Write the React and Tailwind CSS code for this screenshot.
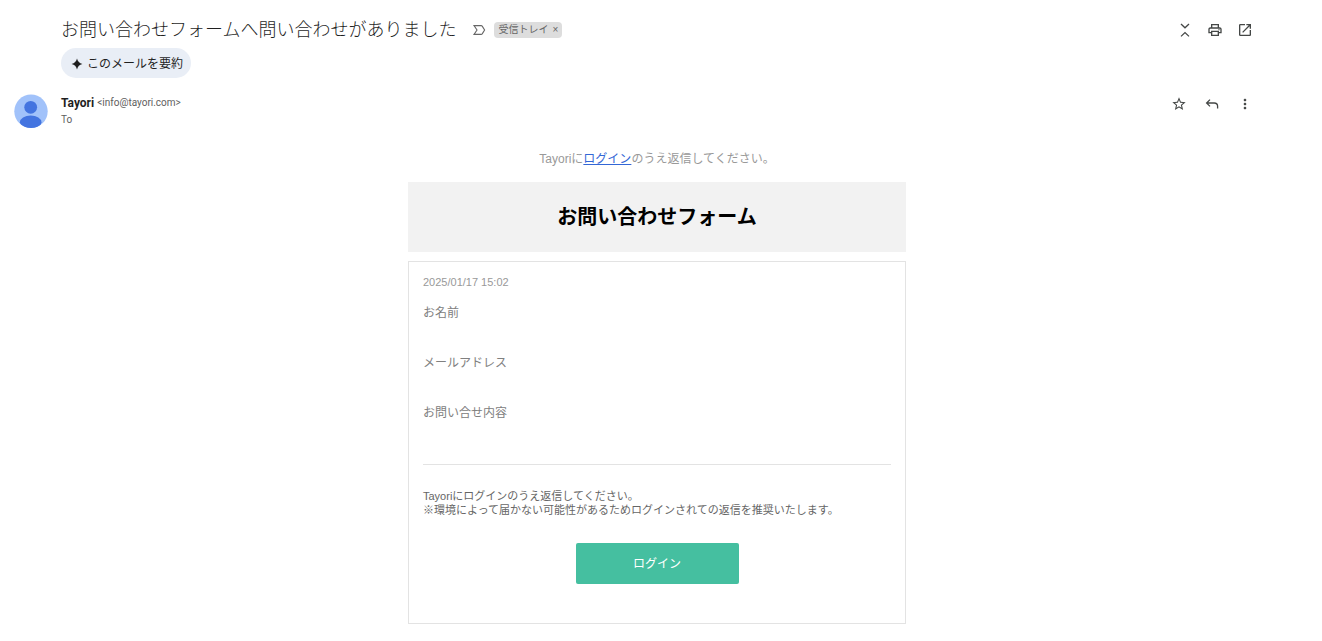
import {
  MdMoreVert,
  MdOpenInNew,
  MdOutlinePrint,
  MdStarBorder,
} from "react-icons/md";

const fields = ["お名前", "メールアドレス", "お問い合せ内容"];

function CollapseIcon() {
  return (
    <svg className="size-4" viewBox="0 0 16 16" fill="none" stroke="currentColor" strokeWidth="1.3">
      <path d="M4 2 8 5.8 12 2M4 14.4 8 10.6 12 14.4" />
    </svg>
  );
}

function ReplyIcon() {
  return (
    <svg className="size-4" viewBox="0 0 16 16" fill="none" stroke="currentColor" strokeWidth="1.3">
      <path d="M6 3.6 2.6 7 6 10.4M2.6 7h7.6q3.4 0 3.4 3.2v2.2" />
    </svg>
  );
}

function ImportanceIcon() {
  return (
    <svg className="h-3 w-3.5" viewBox="0 0 14 12" fill="none" stroke="currentColor" strokeWidth="1.1">
      <path d="M2 1.6h7.2q.6 0 1 .5L12.6 6l-2.4 3.9q-.4.5-1 .5H2L5 6z" />
    </svg>
  );
}

function SparkIcon() {
  return (
    <svg className="size-3" viewBox="0 0 12 12" fill="currentColor">
      <path d="M6 .6Q7 5 11.4 6 7 7 6 11.4 5 7 .6 6 5 5 6 .6z" />
    </svg>
  );
}

function Avatar() {
  return (
    <svg className="size-[34px] shrink-0" viewBox="0 0 34 34" aria-hidden="true">
      <clipPath id="avatar-clip">
        <circle cx="17" cy="17.3" r="16.7" />
      </clipPath>
      <g clipPath="url(#avatar-clip)">
        <rect width="34" height="34" fill="#a1c2fa" />
        <circle cx="16.7" cy="13.3" r="6.4" fill="#4374e0" />
        <ellipse cx="16.7" cy="28.2" rx="10.8" ry="6.8" fill="#4374e0" />
      </g>
    </svg>
  );
}

function IconButton({ label, children }) {
  return (
    <button type="button" aria-label={label} className="flex size-4 items-center justify-center">
      {children}
    </button>
  );
}

export default function App() {
  return (
    <div className="bg-white pt-4 pr-[69px] pb-4 pl-[14px] font-['Liberation_Sans','Noto_Sans_CJK_JP',sans-serif] text-[#444746]">
      <header className="pl-[47px]">
        <div className="flex h-7 items-center">
          <h1 className="text-lg leading-7 font-light text-[#1f1f1f]">
            お問い合わせフォームへ問い合わせがありました
          </h1>
          <span className="ml-4 text-[#666666]">
            <ImportanceIcon />
          </span>
          <div className="ml-2 flex h-4 items-center gap-1 rounded-sm bg-[#dddddd] px-1 text-[10px] leading-4 text-[#666666]">
            <span>受信トレイ</span>
            <button type="button" aria-label="ラベルを削除" className="leading-4">
              ×
            </button>
          </div>
          <div className="ml-auto flex gap-[14px]">
            <IconButton label="すべて折りたたむ">
              <CollapseIcon />
            </IconButton>
            <IconButton label="印刷">
              <MdOutlinePrint className="size-4" />
            </IconButton>
            <IconButton label="新しいウィンドウで開く">
              <MdOpenInNew className="size-4" />
            </IconButton>
          </div>
        </div>
        <button
          type="button"
          className="mt-1 flex h-[30px] items-center gap-1 rounded-full bg-[#e9eef6] pt-0.5 pr-2 pl-2.5 text-xs text-[#1f1f1f]"
        >
          <SparkIcon />
          このメールを要約
        </button>
      </header>

      <div className="mt-4 flex items-start">
        <Avatar />
        <div className="ml-[13px]">
          <div className="flex items-center gap-[3px] font-[Roboto,sans-serif] leading-[18px]">
            <span className="text-xs leading-[18px] font-bold text-[#1f1f1f]">Tayori</span>
            <span className="text-[10px] leading-[18px] text-[#5e5e5e]">&lt;info@tayori.com&gt;</span>
          </div>
          <p className="font-[Roboto,sans-serif] text-[10px] leading-4 text-[#5e5e5e]">To</p>
        </div>
        <div className="mt-0.5 ml-auto flex gap-[17px]">
          <IconButton label="スター">
            <MdStarBorder className="size-4" />
          </IconButton>
          <IconButton label="返信">
            <ReplyIcon />
          </IconButton>
          <IconButton label="その他">
            <MdMoreVert className="size-4" />
          </IconButton>
        </div>
      </div>

      <main className="mt-[21px] pl-[47px]">
        <div className="mx-auto max-w-[498px]">
          <p className="text-center text-xs leading-5 text-[#999999]">
            Tayoriに
            <a href="#login" className="text-[#3367d6] underline">
              ログイン
            </a>
            のうえ返信してください。
          </p>
          <div className="mt-[13px] bg-[#f2f2f2] py-[21px]">
            <h2 className="text-center text-xl leading-7 font-bold text-black">
              お問い合わせフォーム
            </h2>
          </div>

          <section className="mt-[9px] border border-[#e3e3e3] px-3.5 pt-3 pb-[39px]">
            <time className="block text-[11px] leading-4 text-[#999999]">2025/01/17 15:02</time>
            <dl className="mt-[13px]">
              {fields.map((field) => (
                <div key={field} className="h-[50px]">
                  <dt className="text-xs leading-5 text-[#808080]">{field}</dt>
                  <dd></dd>
                </div>
              ))}
            </dl>
            <hr className="mt-[11px] border-[#e3e3e3]" />
            <p className="mt-6 text-[11px] leading-[14px] text-[#666666]">
              Tayoriにログインのうえ返信してください。
              <br />
              ※環境によって届かない可能性があるためログインされての返信を推奨いたします。
            </p>
            <a
              href="#login"
              className="mx-auto mt-[26px] block w-[163px] rounded-xs bg-[#45bfa0] pt-[11px] pb-2.5 text-center text-xs leading-5 text-white"
            >
              ログイン
            </a>
          </section>
        </div>
      </main>
    </div>
  );
}
